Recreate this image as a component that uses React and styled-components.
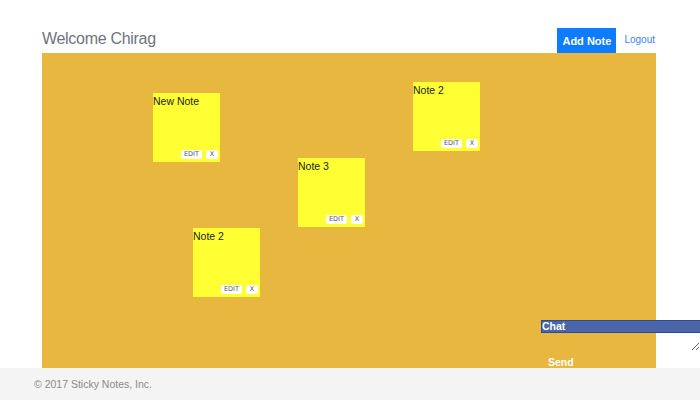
import React from 'react'
import styled, { createGlobalStyle } from 'styled-components'

const notes = [
  { id: 1, text: 'New Note', x: 111, y: 40 },
  { id: 2, text: 'Note 2', x: 371, y: 29 },
  { id: 3, text: 'Note 3', x: 256, y: 105 },
  { id: 4, text: 'Note 2', x: 151, y: 175 },
]

const App = () => {
  return (
    <Page>
      <GlobalStyle />
      <Container>
        <Header>
          <Title>Welcome Chirag</Title>
          <Actions>
            <AddButton>Add Note</AddButton>
            <LogoutLink href="#">Logout</LogoutLink>
          </Actions>
        </Header>
        <Board>
          {notes.map((n) => (
            <Note key={n.id} style={{ left: n.x, top: n.y }}>
              <NoteText>{n.text}</NoteText>
              <NoteButtons>
                <SmallButton>EDIT</SmallButton>
                <SmallButton>X</SmallButton>
              </NoteButtons>
            </Note>
          ))}
        </Board>
      </Container>
      <Footer>© 2017 Sticky Notes, Inc.</Footer>
      <Chat>
        <ChatHeader>Chat</ChatHeader>
        <ChatInput />
        <SendButton>Send</SendButton>
      </Chat>
    </Page>
  )
}

export default App

const GlobalStyle = createGlobalStyle`
  html, body {
    margin: 0;
    padding: 0;
    background: #fff;
    font-family: "Liberation Sans", Arial, sans-serif;
    overflow: hidden;
  }
`

const Page = styled.div`
  height: 400px;
  width: 700px;
  display: flex;
  flex-direction: column;
  position: relative;
  overflow: hidden;
`

const Container = styled.div`
  width: 614px;
  margin-left: 42px;
  flex: 1;
  display: flex;
  flex-direction: column;
`

const Header = styled.div`
  height: 53px;
  display: flex;
  justify-content: space-between;
  align-items: flex-end;
`

const Title = styled.div`
  font-size: 16px;
  color: #6c757d;
  padding-bottom: 5px;
  letter-spacing: -0.3px;
`

const Actions = styled.div`
  display: flex;
  align-items: center;
  gap: 8px;
  padding-right: 1px;
`

const AddButton = styled.button`
  height: 25px;
  width: 59px;
  background: #0f7bff;
  color: #fff;
  border: none;
  border-radius: 0;
  font-family: "Liberation Sans", Arial, sans-serif;
  font-weight: bold;
  font-size: 11px;
  padding: 0;
`

const LogoutLink = styled.a`
  color: #3c82f6;
  font-size: 10px;
  text-decoration: none;
  padding-bottom: 3px;
`

const Board = styled.div`
  flex: 1;
  background: #e8b73f;
  position: relative;
`

const Note = styled.div`
  position: absolute;
  width: 67px;
  height: 69px;
  background: #ffff33;
  display: flex;
  flex-direction: column;
  justify-content: space-between;
`

const NoteText = styled.div`
  color: #222;
  padding: 2px 0 0 0;
  font-family: "Liberation Sans", Arial, sans-serif;
  font-size: 10.5px;
`

const NoteButtons = styled.div`
  display: flex;
  justify-content: flex-end;
  gap: 4px;
  padding: 0 2px 3px 0;
`

const SmallButton = styled.button`
  background: #fff;
  border: none;
  border-radius: 2px;
  font-size: 6.5px;
  color: #555;
  height: 9px;
  padding: 0 3px;
  min-width: 12px;
  font-family: "DejaVu Sans", sans-serif;
  line-height: 9px;
`

const Footer = styled.footer`
  height: 32px;
  background: #f4f4f4;
  color: #8a8a8a;
  font-size: 10.5px;
  display: flex;
  align-items: center;
  padding-left: 34px;
  position: relative;
  z-index: 2;
`

const Chat = styled.div`
  position: absolute;
  left: 541px;
  top: 320px;
  width: 180px;
  display: flex;
  flex-direction: column;
  z-index: 1;
`

const ChatHeader = styled.div`
  height: 11px;
  background: #4a66a8;
  border: 1px solid #2c4b93;
  color: #fff;
  font-weight: bold;
  font-size: 10.5px;
  line-height: 11px;
`

const ChatInput = styled.textarea`
  width: 159px;
  height: 18px;
  background: transparent;
  border: none;
  outline: none;
  padding: 0;
  margin: 0;
`

const SendButton = styled.button`
  align-self: flex-start;
  background: transparent;
  border: none;
  color: #fff;
  font-weight: bold;
  font-size: 10.5px;
  padding: 0 7px;
  margin-top: 5px;
  font-family: "Liberation Sans", Arial, sans-serif;
`
